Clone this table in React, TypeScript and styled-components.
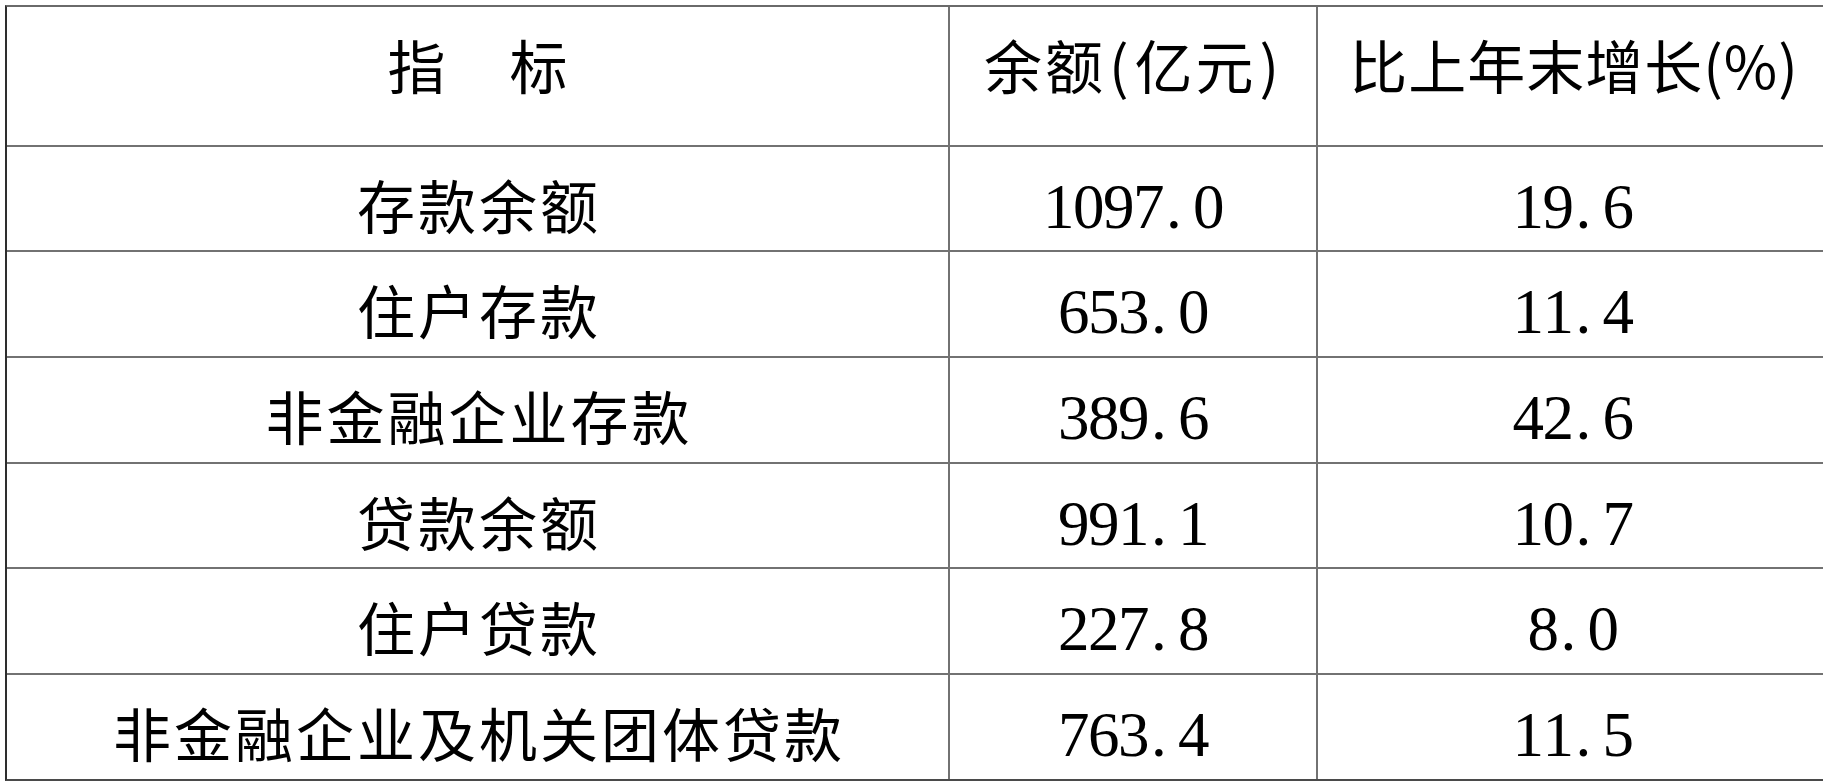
import React from 'react';
import styled, { createGlobalStyle } from 'styled-components';

const rows = [
    ['存款余额', '1097.0', '19.6'],
    ['住户存款', '653.0', '11.4'],
    ['非金融企业存款', '389.6', '42.6'],
    ['贷款余额', '991.1', '10.7'],
    ['住户贷款', '227.8', '8.0'],
    ['非金融企业及机关团体贷款', '763.4', '11.5'],
];

const GlobalStyle = createGlobalStyle`
    html, body {
        margin: 0;
        background: #ffffff;
        overflow: hidden;
    }
    body {
        padding: 5px 0 0 5px;
        font-family: "Noto Sans CJK SC", "Liberation Serif", serif;
    }
`;

const Table = styled.div`
    display: grid;
    grid-template-columns: 941px 366px 509px;
    grid-template-rows: 138px 103px 104px 104px 103px 104px 104px;
    gap: 2px;
    width: max-content;
    background: #727272;
    border-top: 2px solid #6a6a6a;
    border-bottom: 2px solid #4a4a4a;
    border-left: 2px solid #2e2e2e;
`;

const Cell = styled.div<{ $num?: boolean; $spacing?: number }>`
    background: #ffffff;
    display: flex;
    justify-content: center;
    align-items: flex-start;
    padding-top: ${(p) => (p.$num ? 29 : 28)}px;
    padding-left: ${(p) => (p.$num ? 0 : 3)}px;
    box-sizing: border-box;
    color: #000000;
    font-size: ${(p) => (p.$num ? 63 : 58)}px;
    font-family: ${(p) => (p.$num ? '"Liberation Serif", serif' : '"Noto Sans CJK SC", sans-serif')};
    line-height: 1;
    letter-spacing: ${(p) => (p.$num ? 0 : p.$spacing ?? 3)}px;
    white-space: nowrap;
`;

const Paren = styled.span`
    padding: 0 3px;
`;

const Digit = styled.span<{ $dot?: boolean }>`
    display: inline-block;
    width: 30px;
    text-align: ${(p) => (p.$dot ? 'left' : 'center')};
    padding-left: ${(p) => (p.$dot ? 3 : 0)}px;
    box-sizing: border-box;
`;

const Num = ({ value }: { value: string }) => (
    <>
        {value.split('').map((ch, i) => (
            <Digit key={i} $dot={ch === '.'}>
                {ch}
            </Digit>
        ))}
    </>
);

export default function App() {
    return (
        <>
            <GlobalStyle />
            <Table>
                <Cell>指　标</Cell>
                <Cell>
                    余额<Paren>(</Paren>亿元<Paren>)</Paren>
                </Cell>
                <Cell $spacing={1}>比上年末增长(%)</Cell>
                {rows.map(([name, balance, growth]) => (
                    <React.Fragment key={name}>
                        <Cell>{name}</Cell>
                        <Cell $num>
                            <Num value={balance} />
                        </Cell>
                        <Cell $num>
                            <Num value={growth} />
                        </Cell>
                    </React.Fragment>
                ))}
            </Table>
        </>
    );
}
